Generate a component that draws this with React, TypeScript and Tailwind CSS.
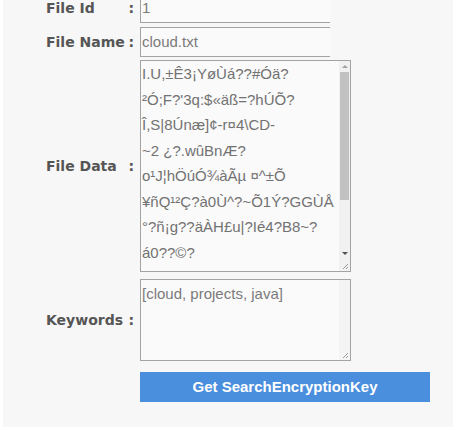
const fileDataLines = [
  "I.U,±Ê3¡YøÙá??#Óä?",
  "²Ó;F?'3q:$«äß=?hÚÕ?",
  "Î,S|8Únæ]¢-r¤4\\CD-",
  "~2 ¿?.wûBnÆ?",
  "o¹J¦hÖúÓ¾àÃµ ¤^±Õ",
  "¥ñQ¹²Ç?à0Ù^?~Õ1Ý?GGÙÅ",
  "°?ñ¡g??äÀH£u|?Ié4?B8~?",
  "á0??©?",
];

const Label = ({ text }: { text: string }) => (
  <div className="flex w-[94px] shrink-0 items-center justify-between pr-[6px] text-[14px] font-bold text-[#555] [font-family:'DejaVu_Sans',sans-serif]">
    <span>{text}</span>
    <span>:</span>
  </div>
);

const Grip = () => (
  <svg width="7" height="7" viewBox="0 0 7 7" className="absolute bottom-[1px] right-[1px]">
    <path d="M6 1 L1 6 M6 4 L4 6" stroke="#999" strokeWidth="1" />
  </svg>
);

const App = () => {
  return (
    <div className="h-[430px] w-[456px] overflow-hidden bg-white">
      <div className="mx-[3px] h-[427px] overflow-hidden bg-[#f7f7f7]">
        <div className="-mt-[7px] flex flex-col pl-[43px] [font-family:'Liberation_Sans',Arial,sans-serif]">
          {/* File Id */}
          <div className="flex items-center">
            <Label text="File Id" />
            <div className="flex h-[30px] w-[190px] items-center border-y border-l border-[#a3a3a3] bg-[#fafafa] pl-[1px] text-[15px] text-[#7a7a7a]">
              1
            </div>
          </div>

          {/* File Name */}
          <div className="mt-[4px] flex items-center">
            <Label text="File Name" />
            <div className="flex h-[30px] w-[190px] items-center border-y border-l border-[#a3a3a3] bg-[#fafafa] pl-[1px] text-[15px] text-[#7a7a7a]">
              cloud.txt
            </div>
          </div>

          {/* File Data */}
          <div className="mt-[3px] flex items-center">
            <Label text="File Data" />
            <div className="relative flex h-[212px] w-[211px] border border-[#a3a3a3] bg-[#fafafa]">
              <div className="flex-1 overflow-hidden pl-[1px] text-[15px] leading-[25.5px] whitespace-pre text-[#727272]">
                {fileDataLines.map((line, i) => (
                  <div key={i}>{line}</div>
                ))}
              </div>
              <div className="relative w-[11px] shrink-0 bg-[#f1f1f1]">
                <div className="absolute left-[3px] top-[4px] h-0 w-0 border-x-[3px] border-b-[3px] border-x-transparent border-b-[#a3a3a3]" />
                <div className="absolute left-[1px] top-[11px] h-[128px] w-[9px] bg-[#c1c1c1]" />
                <div className="absolute bottom-[16px] left-[3px] h-0 w-0 border-x-[3px] border-t-[3px] border-x-transparent border-t-[#505050]" />
              </div>
              <Grip />
            </div>
          </div>

          {/* Keywords */}
          <div className="mt-[7px] flex items-center">
            <Label text="Keywords" />
            <div className="relative flex h-[82px] w-[211px] border border-[#a3a3a3] bg-[#fafafa]">
              <div className="flex-1 pl-[1px] pt-[1px] text-[15px] leading-[25px] text-[#7a7a7a]">
                [cloud, projects, java]
              </div>
              <div className="w-[11px] shrink-0 bg-[#f4f4f4]" />
              <Grip />
            </div>
          </div>

          {/* Submit */}
          <div className="mt-[11px] flex">
            <div className="w-[94px] shrink-0" />
            <button className="h-[30px] w-[290px] bg-[#4a8ede] text-[15px] font-bold text-white">
              Get SearchEncryptionKey
            </button>
          </div>
        </div>
      </div>
    </div>
  );
};

export default App;
